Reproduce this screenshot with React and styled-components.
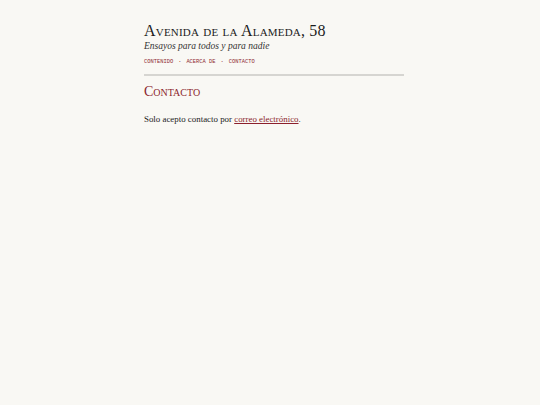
import React from "react";
import styled, { createGlobalStyle } from "styled-components";

const Global = createGlobalStyle`
  html, body {
    margin: 0;
    padding: 0;
    background: #f9f8f4;
  }
  body {
    font-family: "Liberation Serif", "DejaVu Serif", serif;
    color: #222;
  }
`;

const Page = styled.main`
  width: 260px;
  margin: 0 auto;
  padding: 22px 0 0 8px;
`;

const Header = styled.header`
  padding-bottom: 8px;
  border-bottom: 2px solid #d6d5d1;
`;

const Title = styled.h1`
  margin: 0;
  font-size: 16px;
  font-weight: normal;
  font-variant: small-caps;
  line-height: 18px;
  letter-spacing: 0.2px;
  color: #1c1c1c;
`;

const Subtitle = styled.p`
  margin: 0;
  font-size: 9.5px;
  font-style: italic;
  line-height: 12px;
  color: #333;
`;

const Nav = styled.nav`
  display: flex;
  gap: 5px;
  margin-top: 6px;
  font-family: "Liberation Mono", "DejaVu Sans Mono", monospace;
  font-size: 5.4px;
  line-height: 8px;
  text-transform: uppercase;
  color: #8f2a33;
`;

const NavLink = styled.a`
  color: inherit;
  text-decoration: none;
`;

const Dot = styled.span`
  font-weight: bold;
  color: #8f2a33;
`;

const Heading = styled.h2`
  margin: 7px 0 0;
  font-size: 14px;
  font-weight: normal;
  font-variant: small-caps;
  line-height: 18px;
  color: #8c1f2c;
`;

const Text = styled.p`
  margin: 12px 0 0;
  font-size: 8.9px;
  line-height: 12px;
  color: #222;
`;

const Link = styled.a`
  color: #8c1f2c;
  text-decoration: underline;
  text-underline-offset: 1px;
`;

export default function App() {
  return (
    <>
      <Global />
      <Page>
        <Header>
          <Title>Avenida de la Alameda, 58</Title>
          <Subtitle>Ensayos para todos y para nadie</Subtitle>
          <Nav>
            <NavLink href="#">Contenido</NavLink>
            <Dot>·</Dot>
            <NavLink href="#">Acerca de</NavLink>
            <Dot>·</Dot>
            <NavLink href="#">Contacto</NavLink>
          </Nav>
        </Header>
        <Heading>Contacto</Heading>
        <Text>
          Solo acepto contacto por <Link href="#">correo electrónico</Link>.
        </Text>
      </Page>
    </>
  );
}
